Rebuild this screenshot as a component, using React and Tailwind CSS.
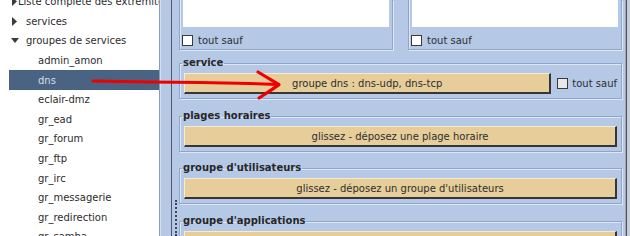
import React from "react";

const font = { fontFamily: '"DejaVu Sans", "Liberation Sans", sans-serif' };

function TriRight() {
  return (
    <svg width="6" height="9" viewBox="0 0 6 9" className="block">
      <polygon points="0,0 5,4.5 0,9" fill="#3a3a3a" />
    </svg>
  );
}
function TriDown() {
  return (
    <svg width="8" height="6" viewBox="0 0 8 6" className="block">
      <polygon points="0,0 8,0 4,5" fill="#3a3a3a" />
    </svg>
  );
}

const children = [
  "admin_amon",
  "dns",
  "eclair-dmz",
  "gr_ead",
  "gr_forum",
  "gr_ftp",
  "gr_irc",
  "gr_messagerie",
  "gr_redirection",
  "gr_samba",
];

function Tree() {
  return (
    <div className="w-[160px] shrink-0 bg-white border-r border-[#8d9cb6] overflow-hidden text-[10px] text-[#2c2c2c]">
      <div className="-mt-[8px]">
        <div className="h-[19.6px] flex items-center pl-[12px]">
          <div className="w-[14px]"><TriRight /></div>
          <span className="whitespace-nowrap">Liste complète des extrémités</span>
        </div>
        <div className="h-[19.6px] flex items-center pl-[12px]">
          <div className="w-[14px]"><TriRight /></div>
          <span>services</span>
        </div>
        <div className="h-[19.6px] flex items-center pl-[11px]">
          <div className="w-[15px]"><TriDown /></div>
          <span>groupes de services</span>
        </div>
        {children.map((c) =>
          c === "dns" ? (
            <div key={c} className="h-[19.6px] flex items-center ml-[9px] pl-[29px] bg-[#4a6382] text-[#d8dee6]">
              {c}
            </div>
          ) : (
            <div key={c} className="h-[19.6px] flex items-center ml-[9px] pl-[29px]">
              {c}
            </div>
          )
        )}
      </div>
    </div>
  );
}

function Btn({ children, className = "" }) {
  return (
    <div
      className={
        "h-[21px] flex items-center justify-center bg-[#e6cd9a] border-t border-l border-t-[#f6ead0] border-l-[#f6ead0] border-b-2 border-r-2 border-b-[#363636] border-r-[#363636] text-[10px] text-[#2e2e2e] whitespace-nowrap " +
        className
      }
    >
      {children}
    </div>
  );
}

function Check({ gray }) {
  return (
    <div
      className={
        "w-[11px] h-[11px] border border-[#3a3a3a] shrink-0 " +
        (gray ? "bg-[#e8e8e8]" : "bg-white")
      }
    />
  );
}

function Group({ title, className = "", children }) {
  return (
    <fieldset
      className={
        "border border-[#8ea5cc] shadow-[inset_1px_1px_0_#dfe7f5,1px_1px_0_#dfe7f5] px-[4px] pt-[4px] pb-[4px] " +
        className
      }
    >
      <legend className="-ml-[2px] px-px text-[10px] leading-[12px] font-bold text-[#262626]">
        {title}
      </legend>
      {children}
    </fieldset>
  );
}

function TopBox() {
  return (
    <div className="w-[214px] h-[50px] border-x border-b border-[#8ea5cc] shadow-[inset_1px_0_0_#dfe7f5,1px_1px_0_#dfe7f5] flex flex-col">
      <div className="h-[27px] mx-[3px] bg-white" />
      <div className="mt-[7px] h-[12px] flex items-center pl-[2px]">
        <Check />
        <span className="ml-[5px] text-[10px] text-[#2e2e2e]">tout sauf</span>
      </div>
    </div>
  );
}

export default function App() {
  return (
    <div
      className="relative w-[630px] h-[236px] overflow-hidden flex bg-[#b5c8e6]"
      style={font}
    >
      <Tree />
      <div className="w-[11px] shrink-0 border-l border-[#d3def0]" />
      <div className="w-px shrink-0 bg-[#4f5868]" />
      <div className="w-[7px] shrink-0 flex flex-col justify-end">
        <div className="ml-[3px] h-[36px] border-l-2 border-dotted border-[#3c4454]" />
      </div>
      <div className="w-[446px] shrink-0 pr-[3px] flex flex-col">
        <div className="flex gap-[15px]">
          <TopBox />
          <TopBox />
        </div>
        <Group title="service" className="mt-[7px]">
          <div className="flex items-center">
            <Btn className="flex-1">groupe dns : dns-udp, dns-tcp</Btn>
            <div className="ml-[6px]">
              <Check gray />
            </div>
            <span className="ml-[4px] text-[10px] text-[#2e2e2e] whitespace-nowrap">tout sauf</span>
          </div>
        </Group>
        <Group title="plages horaires" className="mt-[11px]">
          <Btn>glissez - déposez une plage horaire</Btn>
        </Group>
        <Group title="groupe d'utilisateurs" className="mt-[10px]">
          <Btn>glissez - déposez un groupe d'utilisateurs</Btn>
        </Group>
        <Group title="groupe d'applications" className="mt-[11px]">
          <Btn>glissez - déposez un groupe d'applications</Btn>
        </Group>
      </div>
      <div className="w-px shrink-0 bg-[#9ea8ba]" />
      <div className="w-px shrink-0 bg-[#505050]" />
      <div className="w-[3px] shrink-0 bg-[#c6cedb]" />

      <svg
        className="absolute left-0 top-0 pointer-events-none"
        width="630"
        height="236"
        viewBox="0 0 630 236"
      >
        <path
          d="M93 81 L150 82 L200 82.6 L250 83.6 L278 84.6"
          stroke="#ee0000"
          strokeWidth="3"
          fill="none"
          strokeLinecap="round"
          strokeLinejoin="round"
        />
        <path
          d="M258 72 Q268 78 279 84.6 Q270 91 259 98"
          stroke="#ee0000"
          strokeWidth="3.2"
          fill="none"
          strokeLinecap="round"
          strokeLinejoin="round"
        />
      </svg>
    </div>
  );
}
